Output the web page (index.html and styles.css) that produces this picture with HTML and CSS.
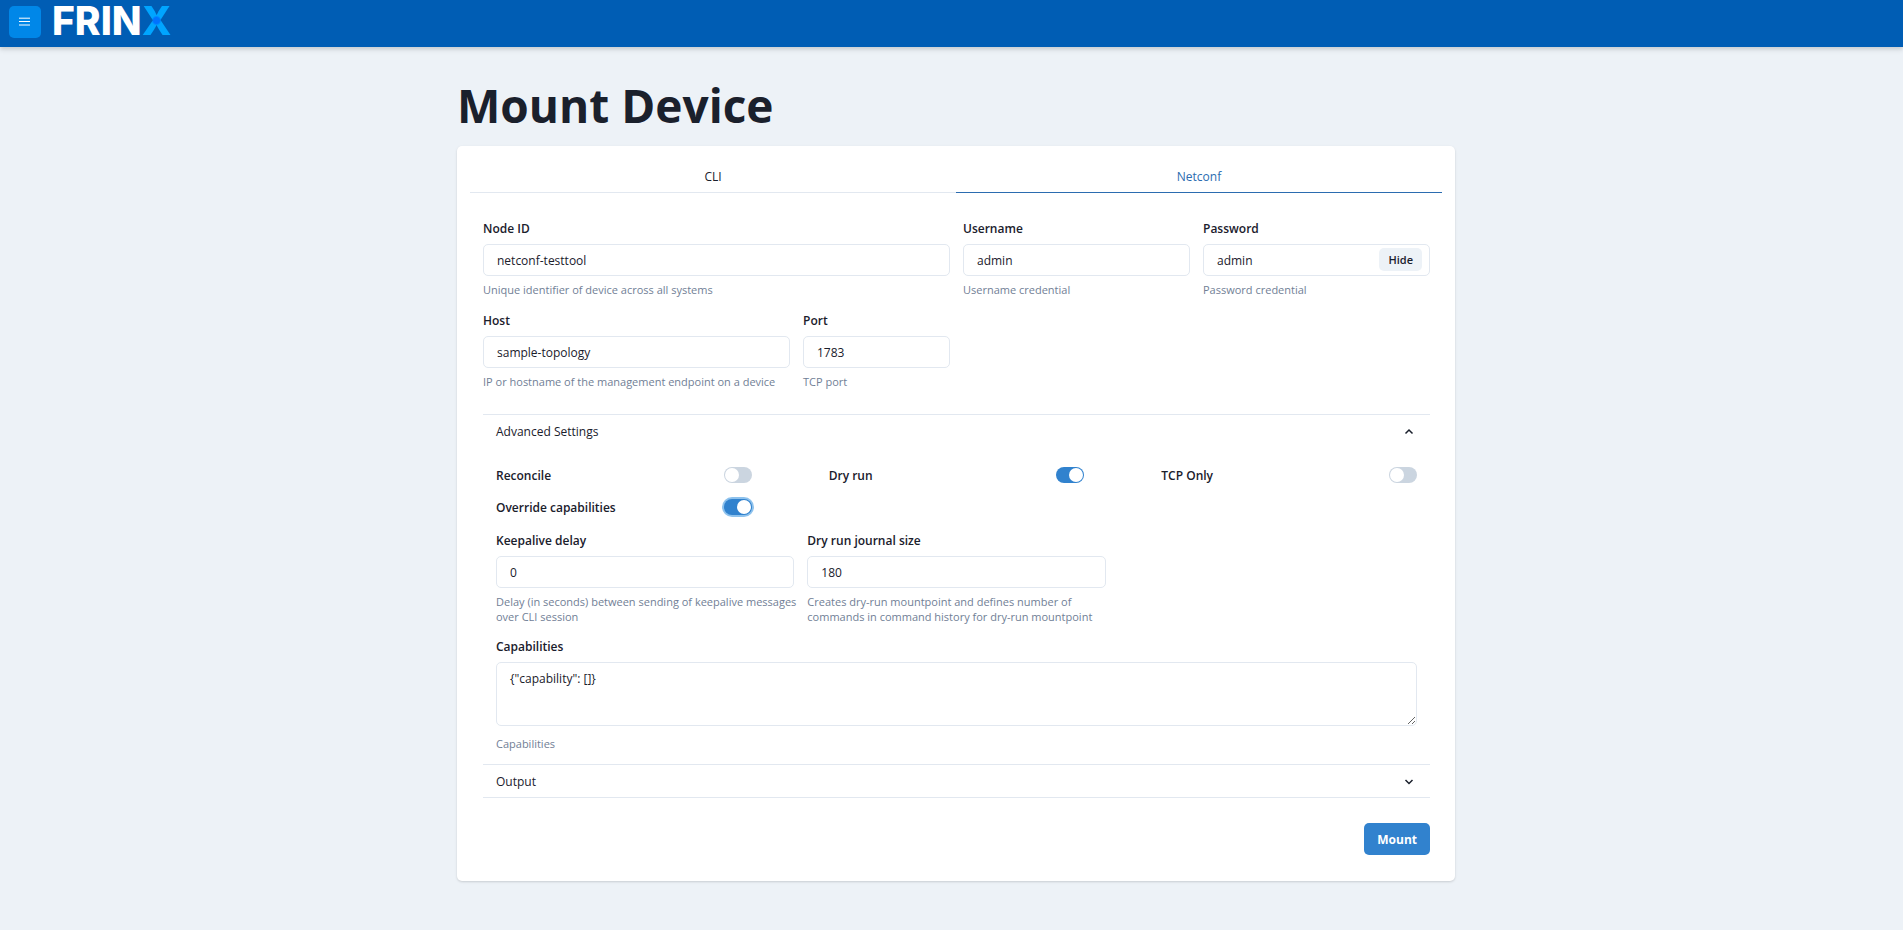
FILE: index.html
```html
<!DOCTYPE html>
<html lang="en">
<head>
<meta charset="utf-8">
<meta name="viewport" content="width=device-width, initial-scale=1">
<title>Mount Device</title>
<link rel="stylesheet" href="styles.css">
</head>
<body>
<header class="topbar">
  <button class="menu-button" type="button" aria-label="Open menu">
    <svg viewBox="0 0 12 12" width="12" height="12" aria-hidden="true"><path d="M0 2.200h11M0 5.500h11M0 9h11"/></svg>
  </button>
  <a class="logo" href="#">FRIN<span class="logo-x">X</span></a>
</header>
<main class="page">
  <h1 class="page-title">Mount Device</h1>
  <section class="card">
    <div class="tabs" role="tablist">
      <button class="tab" type="button" role="tab" aria-selected="false">CLI</button>
      <button class="tab tab-active" type="button" role="tab" aria-selected="true">Netconf</button>
    </div>
    <form class="form">
      <div class="fields">
        <div class="field span-6">
          <label class="label" for="node-id">Node ID</label>
          <input class="input" id="node-id" type="text" value="netconf-testtool">
          <p class="help">Unique identifier of device across all systems</p>
        </div>
        <div class="field span-3">
          <label class="label" for="username">Username</label>
          <input class="input" id="username" type="text" value="admin">
          <p class="help">Username credential</p>
        </div>
        <div class="field span-3">
          <label class="label" for="password">Password</label>
          <div class="input-group">
            <input class="input" id="password" type="text" value="admin">
            <button class="hide-button" type="button">Hide</button>
          </div>
          <p class="help">Password credential</p>
        </div>
        <div class="field span-4">
          <label class="label" for="host">Host</label>
          <input class="input" id="host" type="text" value="sample-topology">
          <p class="help">IP or hostname of the management endpoint on a device</p>
        </div>
        <div class="field span-2">
          <label class="label" for="port">Port</label>
          <input class="input" id="port" type="text" value="1783">
          <p class="help">TCP port</p>
        </div>
      </div>
      <div class="accordion">
        <section class="accordion-item">
          <button class="accordion-button" type="button" aria-expanded="true">Advanced Settings
            <svg class="chevron" viewBox="0 0 16 16" width="16" height="16" aria-hidden="true"><path d="M4.500 9.500 8 6l3.500 3.500"/></svg>
          </button>
          <div class="accordion-panel">
            <div class="switches">
              <div class="switch-row"><label class="label" for="reconcile">Reconcile</label><input class="switch" id="reconcile" type="checkbox" role="switch"></div>
              <div class="switch-row"><label class="label" for="dry-run">Dry run</label><input class="switch" id="dry-run" type="checkbox" role="switch" checked></div>
              <div class="switch-row"><label class="label" for="tcp-only">TCP Only</label><input class="switch" id="tcp-only" type="checkbox" role="switch"></div>
              <div class="switch-row"><label class="label" for="override">Override capabilities</label><input class="switch switch-focused" id="override" type="checkbox" role="switch" checked></div>
            </div>
            <div class="thirds">
              <div class="field">
                <label class="label" for="keepalive">Keepalive delay</label>
                <input class="input" id="keepalive" type="text" value="0">
                <p class="help help-lines">Delay (in seconds) between sending of keepalive messages<br>over CLI session</p>
              </div>
              <div class="field">
                <label class="label" for="journal">Dry run journal size</label>
                <input class="input" id="journal" type="text" value="180">
                <p class="help">Creates dry-run mountpoint and defines number of commands in command history for dry-run mountpoint</p>
              </div>
            </div>
            <div class="field">
              <label class="label" for="capabilities">Capabilities</label>
              <textarea class="input textarea" id="capabilities">{"capability": []}</textarea>
              <p class="help">Capabilities</p>
            </div>
          </div>
        </section>
        <section class="accordion-item">
          <button class="accordion-button" type="button" aria-expanded="false">Output
            <svg class="chevron" viewBox="0 0 16 16" width="16" height="16" aria-hidden="true"><path d="M4.500 6 8 9.500 11.500 6"/></svg>
          </button>
        </section>
      </div>
      <div class="actions"><button class="mount-button" type="submit">Mount</button></div>
    </form>
  </section>
</main>
</body>
</html>
```

FILE: styles.css
```css
*, *::before, *::after { box-sizing: border-box; }

body {
  margin: 0;
  min-height: 100vh;
  background: #edf2f7;
  color: #1a202c;
  font-family: "Open Sans", "Noto Sans", sans-serif;
  font-size: 12px;
  line-height: 20px;
}

button, input, textarea { font: inherit; color: inherit; }
button { border: 0; background: none; padding: 0; cursor: pointer; }
p, h1 { margin: 0; }

.topbar {
  display: flex;
  align-items: flex-start;
  gap: 11px;
  height: 47px;
  padding: 5px 9px;
  background: #005db4;
  box-shadow: 0 3px 5px rgba(0, 0, 0, 0.1), 0 2px 3px rgba(0, 0, 0, 0.06);
}

.menu-button {
  display: grid;
  place-items: center;
  width: 32px;
  height: 32px;
  margin-top: 1px;
  border-radius: 5px;
  background: #0087e8;
}
.menu-button svg { fill: none; stroke: #fff; stroke-width: 1; }

.logo {
  color: #fff;
  font-family: Inter, "Liberation Sans", sans-serif;
  font-size: 39px;
  font-weight: 800;
  line-height: 32px;
  text-decoration: none;
}
.logo-x {
  color: transparent;
  background: radial-gradient(circle at 50% 50%, #0073ff 3px, #00a5ff 5px);
  background-clip: text;
  -webkit-background-clip: text;
}

.page {
  width: 100%;
  max-width: 1023px;
  margin: 0 auto;
  padding: 26px 8px 48px 17px;
}

.page-title {
  margin-bottom: 9px;
  font-size: 46px;
  font-weight: 700;
  line-height: 64px;
}

.card {
  padding: 13px;
  border-radius: 5px;
  background: #fff;
  box-shadow: 0 1px 3px rgba(0, 0, 0, 0.1), 0 1px 2px rgba(0, 0, 0, 0.06);
}

.tabs { display: grid; grid-template-columns: 1fr 1fr; }
.tab {
  height: 34px;
  padding-top: 2px;
  border-bottom: 1px solid #e2e8f0;
}
.tab-active { border-color: #2b6cb0; color: #2b6cb0; }

.form { padding: 25px 12px 13px 13px; }

.fields {
  display: grid;
  grid-template-columns: repeat(12, minmax(0, 1fr));
  gap: 13px;
}
.span-6 { grid-column: span 6; }
.span-4 { grid-column: span 4; }
.span-3 { grid-column: span 3; }
.span-2 { grid-column: span 2; }

.field { display: flex; flex-direction: column; }
.label { font-weight: 600; }
.field > .label { margin-bottom: 4px; line-height: 22px; }

.input {
  display: block;
  width: 100%;
  height: 32px;
  padding: 0 13px;
  border: 1px solid #e2e8f0;
  border-radius: 5px;
  background: #fff;
  outline: 0;
}
.textarea {
  height: 64px;
  margin-bottom: 4px;
  padding: 6px 13px;
  resize: vertical;
}
.help {
  margin-top: 6px;
  color: #718096;
  font-size: 11px;
  line-height: 15px;
}
.help-lines { white-space: nowrap; }

.input-group { position: relative; }
.input-group .input { padding-right: 58px; }
.hide-button {
  position: absolute;
  top: 4px;
  right: 8px;
  height: 23px;
  padding: 0 9px;
  border-radius: 5px;
  background: #edf2f7;
  font-size: 11px;
  font-weight: 600;
}

.accordion { margin-top: 25px; border-bottom: 1px solid #e2e8f0; }
.accordion-item { border-top: 1px solid #e2e8f0; }
.accordion-button {
  display: flex;
  align-items: center;
  justify-content: space-between;
  width: 100%;
  padding: 7px 13px 5px;
  text-align: left;
}
.chevron { fill: none; stroke: #1a202c; stroke-width: 1.5; }
.accordion-panel {
  display: flex;
  flex-direction: column;
  gap: 12px;
  padding: 19px 13px 13px;
}

.switches, .thirds { display: grid; grid-template-columns: repeat(3, minmax(0, 1fr)); }
.switches { gap: 12px 77px; }
.thirds { gap: 13px; }
.switch-row { display: flex; align-items: center; justify-content: space-between; }

.switch {
  appearance: none;
  display: flex;
  flex: none;
  width: 28px;
  height: 16px;
  margin: 0 0 2px;
  padding: 1px;
  border-radius: 8px;
  background: #cbd5e0;
}
.switch::before {
  content: "";
  width: 14px;
  height: 14px;
  border-radius: 50%;
  background: #fff;
}
.switch:checked { justify-content: flex-end; background: #3182ce; }
.switch-focused { box-shadow: 0 0 0 2px rgba(66, 153, 225, 0.6); }

.actions { display: flex; justify-content: flex-end; margin-top: 25px; }
.mount-button {
  height: 32px;
  padding: 1px 13px 0;
  border-radius: 5px;
  background: #3182ce;
  color: #fff;
  font-weight: 700;
}
```
